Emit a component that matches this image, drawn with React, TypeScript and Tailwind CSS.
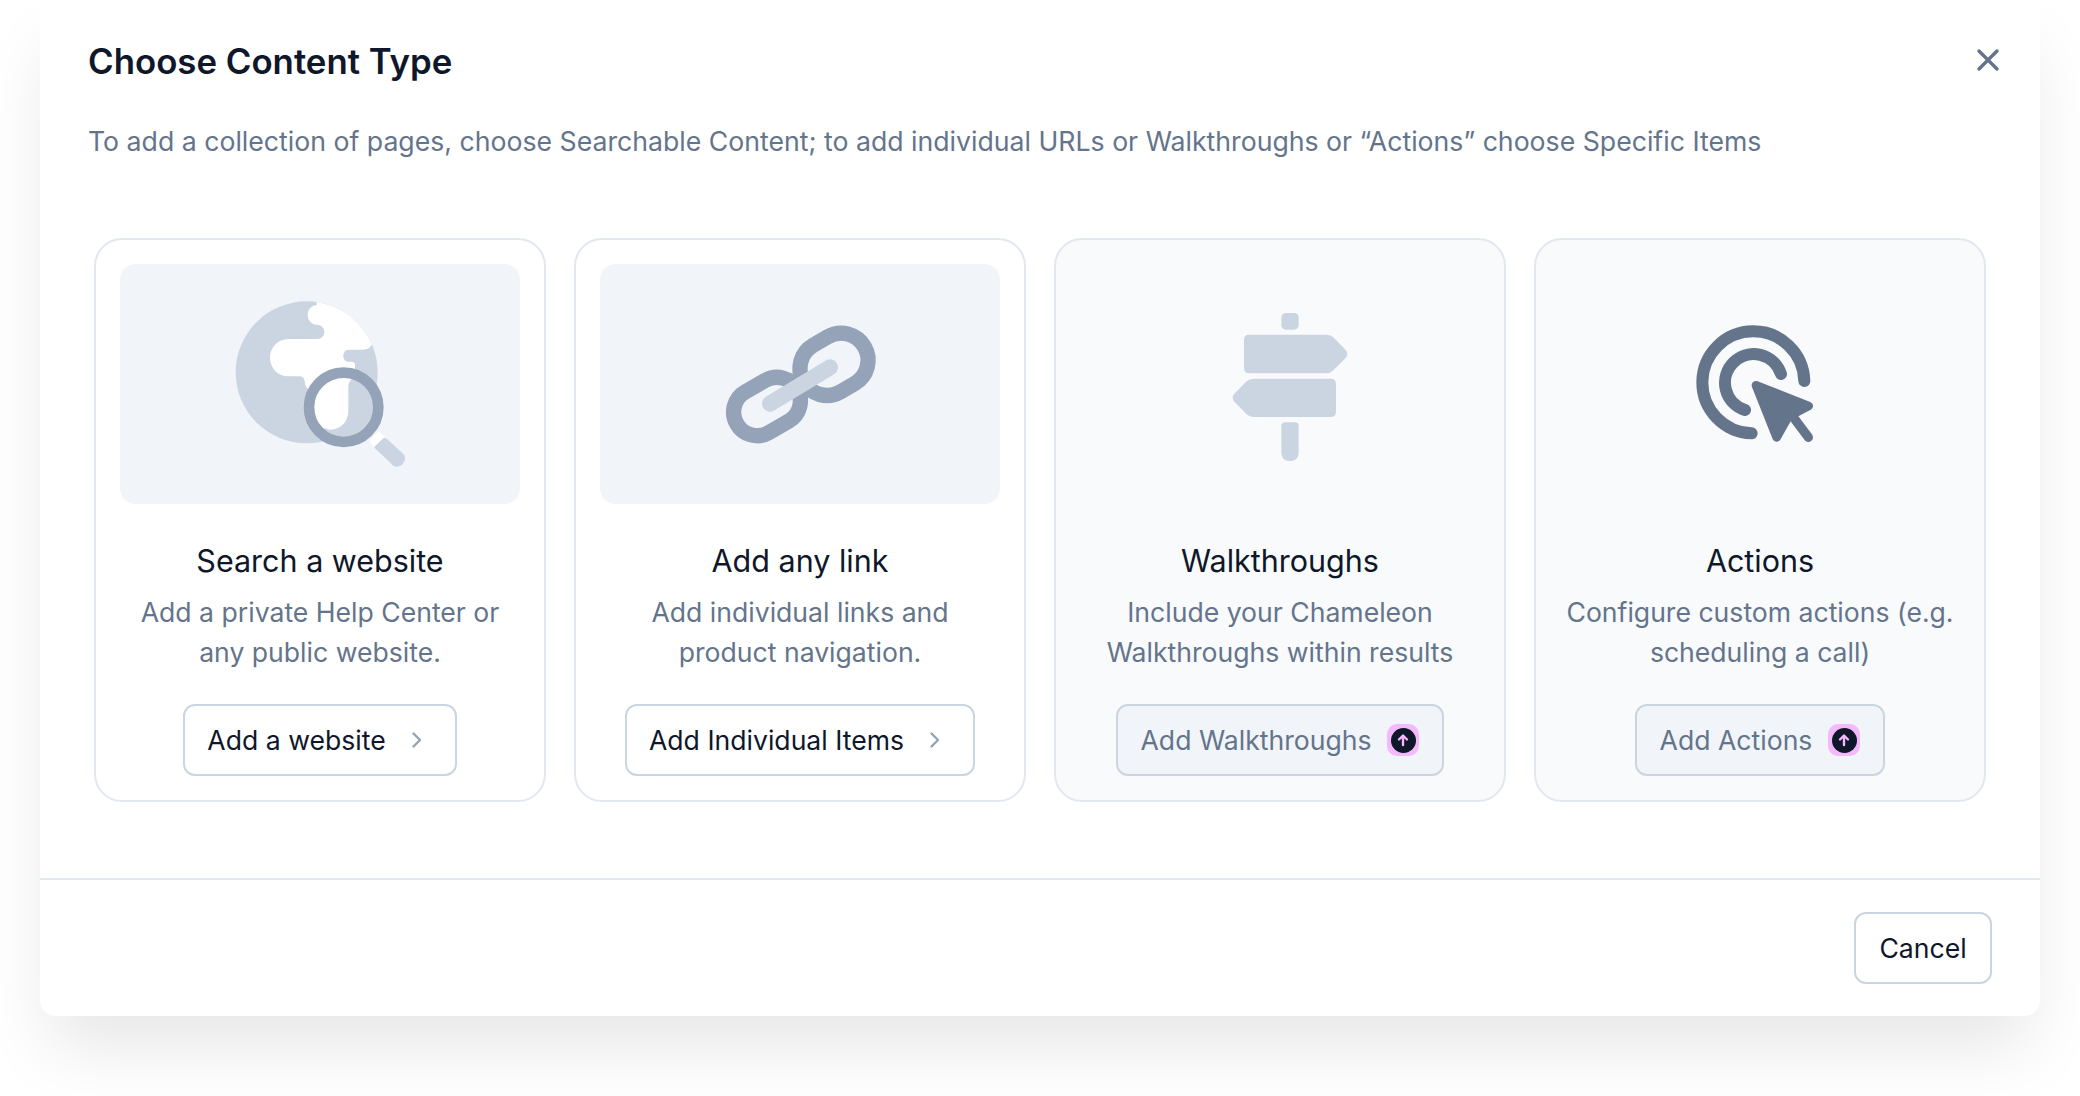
import React from 'react';

const FONT = 'font-["Inter","Liberation_Sans",sans-serif]';

const GlobeIcon = () => (
  <svg viewBox="90 100 1200 720" className="block w-full h-full">
    <defs>
      <clipPath id="globe-clip">
        <circle cx="650" cy="425" r="213" />
        <circle cx="760" cy="530" r="100" />
      </clipPath>
    </defs>
    <circle cx="650" cy="425" r="213" fill="#cbd5e1" />
    <circle cx="760" cy="530" r="100" fill="#cbd5e1" />
    <path
      clipPath="url(#globe-clip)"
      fill="#fff"
      d="M680 224 C664 224 653 238 653 253 C653 270 666 282 680 282 C694 282 703 292 703 303 C703 316 694 325 680 325 L595 325 C564 325 540 350 540 381 C540 412 564 437 595 437 L628 437 C638 437 643 444 644 452 C645 466 650 472 660 480 L665 570 L690 590 L720 597 C752 597 775 572 775 540 L775 470 C775 452 785 445 795 438 L795 402 C795 396 790 393 785 393 L775 393 C766 393 760 385 760 375 C760 365 766 357 775 357 L820 357 C835 357 845 348 848 335 L920 300 L800 170 L680 210 Z"
    />
    <path fill="#fff" d="M838 630 L865 602 L887 620 L852 652 Z" />
    <path
      fill="#cbd5e1"
      d="M852 650 L878 624 Q884 618 892 626 L940 670 C955 684 935 718 910 705 Z"
    />
    <circle cx="761" cy="530" r="104" fill="none" stroke="#94a3b8" strokeWidth="32" />
  </svg>
);

const ChainIcon = () => (
  <svg viewBox="90 100 1200 720" className="block w-full h-full">
    <rect x="486.5" y="457" width="209" height="141" rx="70" transform="rotate(-30 591 527.5)" fill="none" stroke="#94a3b8" strokeWidth="46" />
    <rect x="686.5" y="320" width="211" height="162" rx="81" transform="rotate(-30 792 401)" fill="none" stroke="#94a3b8" strokeWidth="46" />
    <line x1="600" y1="519" x2="780" y2="410" stroke="#cbd5e1" strokeWidth="48" strokeLinecap="round" />
  </svg>
);

const SignpostIcon = () => (
  <svg viewBox="-300 -78 1200 720" className="block w-full h-full" fill="#cbd5e1">
    <rect x="304" y="69" width="52" height="50" rx="14" />
    <path d="M208 134 L440 134 Q452 134 460 142 L497 180 Q507 192 497 204 L460 241 Q452 250 440 250 L208 250 Q192 250 192 234 L192 150 Q192 134 208 134 Z" />
    <path d="M452 266 Q468 266 468 282 L468 365 Q468 381 452 381 L220 381 Q208 381 200 373 L163 335 Q153 323 163 311 L200 274 Q208 266 220 266 Z" />
    <path d="M316 397 L344 397 Q356 397 356 409 L356 487 Q356 513 330 513 Q304 513 304 487 L304 409 Q304 397 316 397 Z" />
  </svg>
);

const TargetCursorIcon = () => (
  <svg viewBox="-300 -108 1200 720" className="block w-full h-full">
    <g fill="none" stroke="#64748b" strokeWidth="36" strokeLinecap="round">
      <path d="M433 243 A153 153 0 1 0 275 400" />
      <path d="M363 222 A86 86 0 1 0 255 330" />
    </g>
    <path d="M288 256 L446 318 L385 350 L350 412 Z" fill="#64748b" stroke="#64748b" strokeWidth="26" strokeLinejoin="round" />
    <line x1="395" y1="345" x2="445" y2="412" stroke="#64748b" strokeWidth="28" strokeLinecap="round" />
  </svg>
);

const UpgradeBadge = () => (
  <span className="ml-4 flex h-8 w-8 items-center justify-center rounded-[10px] bg-[#f5b8fb]">
    <span className="flex h-[25px] w-[25px] items-center justify-center rounded-full bg-[#0f172a]">
      <svg viewBox="0 0 14 14" className="h-[14px] w-[14px]" fill="none" stroke="#f5b8fb" strokeWidth="2.4" strokeLinecap="round" strokeLinejoin="round">
        <path d="M7 12 V3 M3 6.5 L7 2.5 L11 6.5" />
      </svg>
    </span>
  </span>
);

const Chevron = () => (
  <svg viewBox="0 0 32 32" className="ml-[15px] h-8 w-8" fill="none" stroke="#94a3b8" strokeWidth="2.4" strokeLinecap="round" strokeLinejoin="round">
    <path d="M12.5 9.5 L19 16 L12.5 22.5" />
  </svg>
);

interface CardProps {
  title: string;
  lines: string[];
  action: string;
  locked?: boolean;
  icon: React.ReactNode;
}

const ContentCard = ({ title, lines, action, locked, icon }: CardProps) => (
  <div className={`flex w-[452px] flex-col items-center rounded-[28px] border-2 border-[#e2e8f0] p-6 ${locked ? 'bg-[#f8fafc]' : 'bg-white'}`}>
    <div className={`h-60 w-[400px] rounded-2xl ${locked ? '' : 'bg-[#f1f5f9]'}`}>{icon}</div>
    <h3 className="mt-[37px] text-[30.5px] leading-10 text-[#0f172a]">{title}</h3>
    <p className="mt-[11px] text-center text-[26.6px] leading-10 text-[#64748b]">
      {lines[0]}
      <br />
      {lines[1]}
    </p>
    <button className={`mt-8 flex h-[72px] items-center rounded-xl border-2 border-[#cbd5e1] text-[26.6px] ${locked ? 'bg-[#f1f5f9] px-[23px] text-[#64748b]' : 'bg-white px-[22px] text-[#0f172a]'}`}>
      <span className="pt-0.5">{action}</span>
      {locked ? <UpgradeBadge /> : <Chevron />}
    </button>
  </div>
);

export default function App() {
  return (
    <div className={`min-h-[1096px] overflow-hidden bg-white px-10 ${FONT}`}>
      <div className="relative flex h-[1016px] w-[2000px] flex-col rounded-b-2xl bg-white shadow-[0_40px_70px_-10px_rgba(0,0,0,0.1)]">
        <button className="absolute right-[40px] top-[48px] h-6 w-6">
          <svg viewBox="0 0 24 24" className="h-6 w-6" fill="none" stroke="#64748b" strokeWidth="3.4" strokeLinecap="round">
            <path d="M3 3 L21 21 M21 3 L3 21" />
          </svg>
        </button>
        <div className="px-12 pt-[41px]">
          <h2 className="text-[34.8px] font-semibold leading-10 text-[#0f172a]">Choose Content Type</h2>
          <p className="mt-10 text-[26.66px] leading-10 text-[#64748b]">
            To add a collection of pages, choose Searchable Content; to add individual URLs or Walkthroughs or “Actions” choose Specific Items
          </p>
        </div>
        <div className="ml-[54px] mt-[77px] flex gap-7">
          <ContentCard title="Search a website" lines={['Add a private Help Center or', 'any public website.']} action="Add a website" icon={<GlobeIcon />} />
          <ContentCard title="Add any link" lines={['Add individual links and', 'product navigation.']} action="Add Individual Items" icon={<ChainIcon />} />
          <ContentCard locked title="Walkthroughs" lines={['Include your Chameleon', 'Walkthroughs within results']} action="Add Walkthroughs" icon={<SignpostIcon />} />
          <ContentCard locked title="Actions" lines={['Configure custom actions (e.g.', 'scheduling a call)']} action="Add Actions" icon={<TargetCursorIcon />} />
        </div>
        <div className="mt-[76px] flex justify-end border-t-2 border-[#e2e8f0] px-12 py-8">
          <button className="flex h-[72px] w-[138px] items-center justify-center rounded-xl border-2 border-[#cbd5e1] bg-white pt-0.5 text-[26.6px] text-[#0f172a]">
            Cancel
          </button>
        </div>
      </div>
    </div>
  );
}
